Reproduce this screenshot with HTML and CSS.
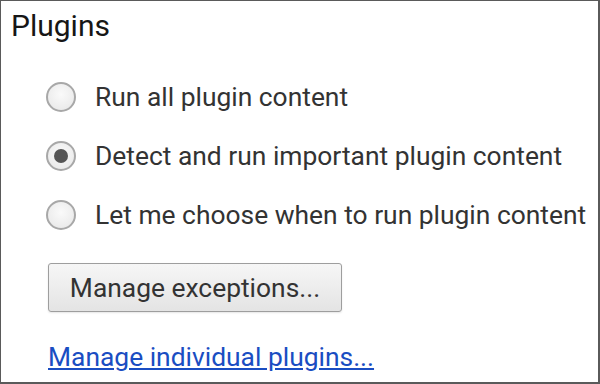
FILE: index.html
```html
<!DOCTYPE html>
<html>

<head>
    <meta charset="UTF-8">
    <title>Plugins</title>
    <link rel="stylesheet" href="styles.css">
</head>

<body>
    <div class="panel">
        <h1>Plugins</h1>

        <div class="options">
            <label class="option">
                <span class="radio"></span>
                <span class="option-text">Run all plugin content</span>
            </label>
            <label class="option">
                <span class="radio checked"></span>
                <span class="option-text">Detect and run important plugin content</span>
            </label>
            <label class="option">
                <span class="radio"></span>
                <span class="option-text">Let me choose when to run plugin content</span>
            </label>
        </div>

        <button class="exceptions-btn">Manage exceptions...</button>

        <a class="plugins-link" href="#">Manage individual plugins...</a>
    </div>
</body>

</html>
```

FILE: styles.css
```css
html,
body {
    margin: 0;
    padding: 0;
    background: white;
}

body {
    font-family: Roboto, "Liberation Sans", Arial, sans-serif;
}

.panel {
    width: 600px;
    height: 384px;
    box-sizing: border-box;
    border-style: solid;
    border-color: #5a5a5a;
    border-width: 1px 2px 2px 1px;
    padding: 0 0 0 10px;
    overflow: hidden;
}

h1 {
    margin: 0;
    padding-top: 7px;
    font-size: 30px;
    font-weight: normal;
    color: #161616;
    line-height: 36px;
}

.options {
    margin-top: 23px;
    padding-left: 35px;
}

.option {
    display: flex;
    align-items: center;
    gap: 19px;
    height: 59px;
    color: #333;
    font-size: 26.4px;
}

.radio {
    flex: none;
    width: 26px;
    height: 26px;
    border: 2px solid #a8a8a8;
    border-radius: 50%;
    background: radial-gradient(circle at 50% 40%, #fafafa, #e6e6e6);
    display: flex;
    align-items: center;
    justify-content: center;
}

.radio.checked::after {
    content: "";
    width: 14px;
    height: 14px;
    border-radius: 50%;
    background: #555;
}

.exceptions-btn {
    display: block;
    margin: 19px 0 0 37px;
    width: 294px;
    height: 49px;
    border: 1px solid #9e9e9e;
    border-radius: 3px;
    background: linear-gradient(#f6f6f6, #e4e4e4);
    box-shadow: 0 1px 2px rgba(0, 0, 0, 0.1);
    font-family: inherit;
    font-size: 26.4px;
    color: #333;
    padding: 0;
}

.plugins-link {
    display: inline-block;
    margin: 30px 0 0 37px;
    font-size: 26.4px;
    color: #1a4dc2;
    text-decoration: underline;
}
```
